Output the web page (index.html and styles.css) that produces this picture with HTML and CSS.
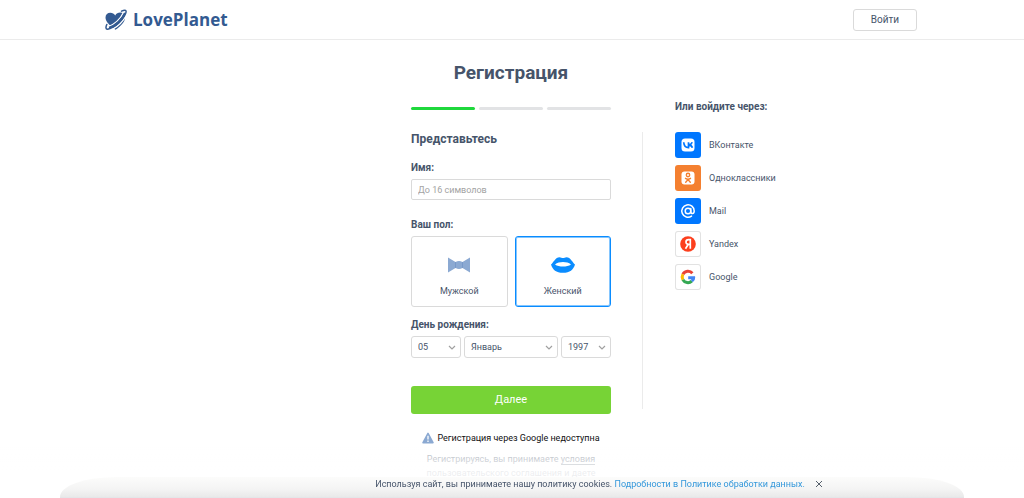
FILE: index.html
```html
<!DOCTYPE html>
<html lang="ru">
<head>
<meta charset="utf-8">
<meta name="viewport" content="width=device-width, initial-scale=1">
<title>LovePlanet — Регистрация</title>
<link rel="stylesheet" href="styles.css">
</head>
<body>
<header class="header">
  <div class="header-inner">
    <a class="logo" href="#">
      <svg class="logo-mark" viewBox="0 0 22 22" aria-hidden="true">
        <path fill="#335a91" d="M6.800 18C3.500 15 .5 12 .5 8.500.5 5.500 2.600 3.700 5.300 3.700c2.200 0 3.800.9 4.900 2.700 1.200-2 2.800-2.900 5-2.900 2.900 0 4.800 2 4.800 4.900 0 4.800-4.500 8.600-9.500 12.300z"/>
        <path fill="none" stroke="#fff" stroke-width="1.500" d="M2 18.500C8.500 16 15.500 10 18.800 3M7 20.500C13 17.500 18 12.500 21 6.500"/>
        <path fill="none" stroke="#335a91" stroke-width="1.500" stroke-linecap="round" d="M1.800 15.500C.6 18.200.6 20.400 2.600 20.200 9 19 18.500 10.500 20.800 4c.9-2.600-.2-3.800-4.300-1.800"/>
        <path fill="none" stroke="#335a91" stroke-width="2" d="M4 18.800C11 16.500 17.500 10 20 4"/>
      </svg>
      <span>LovePlanet</span>
    </a>
    <button class="login" type="button">Войти</button>
  </div>
</header>

<main class="main">
  <h1 class="title">Регистрация</h1>
  <form class="form">
    <div class="steps"><span class="step step-active"></span><span class="step"></span><span class="step"></span></div>
    <h2 class="subtitle">Представьтесь</h2>
    <label class="label" for="name">Имя:</label>
    <input class="input" id="name" type="text" maxlength="16" placeholder="До 16 символов">
    <fieldset class="group">
      <legend class="label">Ваш пол:</legend>
      <div class="genders">
        <label class="gender">
          <input class="gender-radio" type="radio" name="gender" value="m">
          <svg class="gender-icon" viewBox="0 0 24 18" aria-hidden="true">
            <path fill="#8ba9d2" d="M1 1.500 8.500 6Q12 4.200 15.500 6L23 1.500v15L15.500 12Q12 13.800 8.500 12L1 16.500z"/>
            <path fill="none" stroke="#7396c6" stroke-width=".8" d="M8.500 6V12M15.500 6V12"/>
          </svg>
          <span>Мужской</span>
        </label>
        <label class="gender">
          <input class="gender-radio" type="radio" name="gender" value="f" checked>
          <svg class="gender-icon" viewBox="0 0 24 18" aria-hidden="true">
            <path fill="#0a8cff" fill-rule="evenodd" d="M0 8.500C2.500 6.500 4.500 1.200 8.500 1.200c1.500 0 2.300.8 3.500.8s2-.8 3.500-.8c4 0 6 5.300 8.500 7.300-1.800 5.500-5 8.300-12 8.300S1.800 14 0 8.500zM4 8.500c4 2.800 12 2.800 16 0-4-3.200-12-3.200-16 0z"/>
          </svg>
          <span>Женский</span>
        </label>
      </div>
    </fieldset>
    <fieldset class="group">
      <legend class="label">День рождения:</legend>
      <div class="dates">
        <select class="select" aria-label="День"><option>05</option></select>
        <select class="select" aria-label="Месяц"><option>Январь</option></select>
        <select class="select" aria-label="Год"><option>1997</option></select>
      </div>
    </fieldset>
    <button class="submit" type="submit">Далее</button>
  </form>

  <div class="side">
    <div class="divider"></div>
    <aside class="social">
      <h2 class="social-title">Или войдите через:</h2>
      <a class="social-link" href="#">
        <svg class="tile tile-blue" viewBox="0 0 26 26" aria-hidden="true">
          <rect x="6.500" y="6.500" width="13" height="13" rx="3.500" fill="#fff"/>
          <path fill="none" stroke="#07f" stroke-width="1.700" d="M8.700 10.200c.3 3.600 1.900 5.400 4.800 5.400V10.200M17.200 10.200c-.5 1.500-1.700 2.400-3.500 2.700 2 .2 3.200 1.200 3.700 2.900"/>
        </svg>
        <span>ВКонтакте</span>
      </a>
      <a class="social-link" href="#">
        <svg class="tile tile-orange" viewBox="0 0 26 26" aria-hidden="true">
          <rect x="6.500" y="6.500" width="13" height="13" rx="3" fill="#fff"/>
          <g fill="none" stroke="#f48030" stroke-width="1.400" stroke-linecap="round"><circle cx="13" cy="10" r="1.700"/><path d="M10.500 13.300q2.500 1.700 5 0M13 14.600l-2.300 2.600M13 14.600l2.300 2.600"/></g>
        </svg>
        <span>Одноклассники</span>
      </a>
      <a class="social-link" href="#">
        <svg class="tile tile-blue" viewBox="0 0 26 26" aria-hidden="true">
          <g fill="none" stroke="#fff" stroke-width="1.500" stroke-linecap="round"><circle cx="13" cy="13" r="2.800"/><path d="M15.800 10.500V13.600c0 2.800 3.400 2.600 3.400-.6A6.200 6.200 0 1 0 16.500 18.100"/></g>
        </svg>
        <span>Mail</span>
      </a>
      <a class="social-link" href="#">
        <svg class="tile" viewBox="0 0 26 26" aria-hidden="true">
          <circle cx="13" cy="13" r="7.800" fill="#fc3f1d"/>
          <path fill="none" stroke="#fff" stroke-width="1.700" d="M15.300 17.800V8.700H13.500c-3.300 0-3.400 4.700 0 4.700h1.600M13.300 13.300l-2.800 4.500"/>
        </svg>
        <span>Yandex</span>
      </a>
      <a class="social-link" href="#">
        <svg class="tile" viewBox="0 0 26 26" aria-hidden="true">
          <g fill="none" stroke-width="3"><path stroke="#ea4335" d="M17.400 9.200A5.800 5.800 0 0 0 7.900 10.300"/><path stroke="#fbbc05" d="M7.900 10.300a5.800 5.800 0 0 0 0 5.400"/><path stroke="#34a853" d="M7.900 15.700a5.800 5.800 0 0 0 8.900 1.500"/><path stroke="#4285f4" d="M16.800 17.200c1.300-1.100 2-2.600 1.900-3.500H13.200"/></g>
        </svg>
        <span>Google</span>
      </a>
    </aside>
  </div>

  <div class="notes">
    <p class="warning">
      <svg class="warning-icon" viewBox="0 0 12 12" aria-hidden="true">
        <path fill="#8ba9d2" stroke="#8ba9d2" stroke-width="1.500" stroke-linejoin="round" d="M6 1.300 11 10.700H1z"/>
        <path stroke="#fff" stroke-width="1.300" d="M6 3.800v3.700M6 8.500v1.400"/>
      </svg>
      <span>Регистрация через Google недоступна</span>
    </p>
    <p class="terms">Регистрируясь, вы принимаете <a class="terms-link" href="#">условия</a><br><a class="terms-link" href="#">пользовательского соглашения</a> и даете</p>
  </div>
</main>

<div class="cookies">
  <div class="cookies-bar">
    <span>Используя сайт, вы принимаете нашу политику cookies. <a class="cookies-link" href="#">Подробности в Политике обработки данных.</a></span>
    <button class="close" type="button" aria-label="Закрыть">
      <svg class="close-icon" viewBox="0 0 8 8" aria-hidden="true"><path stroke="#555f6b" stroke-width="1" d="M1 1l6 6M7 1 1 7"/></svg>
    </button>
  </div>
</div>
</body>
</html>
```
FILE: styles.css
```css
* {
  box-sizing: border-box;
}

body {
  margin: 0;
  background: #fff;
  color: #46546a;
  font: 9px/14px Roboto, "Open Sans", sans-serif;
}

button,
input,
select {
  font: inherit;
  color: inherit;
}

a {
  color: inherit;
  text-decoration: none;
}

.header {
  padding: 0 18px 0 16px;
  border-bottom: 1px solid #ebebeb;
}

.header-inner {
  display: flex;
  align-items: center;
  justify-content: space-between;
  max-width: 812px;
  height: 39px;
  margin: 0 auto;
}

.logo {
  display: flex;
  align-items: center;
  gap: 6px;
  color: #335a91;
  font: bold 17px/22px "Open Sans", sans-serif;
}

.logo-mark {
  width: 22px;
  height: 22px;
}

.login {
  width: 64px;
  height: 22px;
  padding: 0;
  border: 1px solid #dadada;
  border-radius: 3px;
  background: #fff;
  font-size: 10px;
}

.main {
  display: grid;
  grid-template-columns: 1fr 200px 1fr;
  padding: 20px 2px 0 0;
}

.title {
  grid-column: 1 / -1;
  margin: 0 0 21px;
  font-size: 19px;
  line-height: 26px;
  text-align: center;
}

.form {
  grid-column: 2;
}

.steps {
  display: grid;
  grid-template-columns: repeat(3, 1fr);
  gap: 4px;
}

.step {
  height: 3px;
  border-radius: 2px;
  background: #e2e3e5;
}

.step-active {
  background: #1fd83c;
}

.subtitle {
  margin: 21px 0 14px;
  font-size: 12px;
  line-height: 16px;
}

.label {
  display: block;
  padding: 0;
  margin-bottom: 4px;
  font-size: 10px;
  font-weight: bold;
}

.input {
  width: 100%;
  height: 21px;
  padding: 0 6px;
  border: 1px solid #dadada;
  border-radius: 2px;
  background: #fff;
}

.input::placeholder {
  color: #a3a3a3;
}

.group {
  min-width: 0;
  margin: 0;
  padding: 0;
  border: 0;
}

.input + .group {
  margin: 18px 0 11px;
}

.genders {
  display: grid;
  grid-template-columns: 1fr 1fr;
  gap: 7px;
}

.gender {
  display: flex;
  flex-direction: column;
  align-items: center;
  gap: 10px;
  padding: 19px 0 8px;
  border: 1px solid #dadada;
  border-radius: 3px;
}

.gender:has(:checked) {
  border-color: #0a8cff;
  box-shadow: inset 0 0 0 1px #84c6ff;
}

.gender-radio {
  position: absolute;
  opacity: 0;
}

.gender-icon {
  width: 24px;
  height: 18px;
}

.dates {
  display: grid;
  grid-template-columns: 50px 1fr 50px;
  gap: 3px;
}

.select {
  height: 22px;
  padding: 0 6px;
  border: 1px solid #dadada;
  border-radius: 3px;
  appearance: none;
  background: #fff url("data:image/svg+xml,%3Csvg xmlns='http://www.w3.org/2000/svg' viewBox='0 0 8 5'%3E%3Cpath fill='none' stroke='%23a0a0a0' stroke-width='1.200' d='M1 1l3 3 3-3'/%3E%3C/svg%3E") no-repeat right 4px center / 8px 5px;
}

.submit {
  width: 100%;
  height: 28px;
  margin-top: 28px;
  padding: 0;
  border: 0;
  border-radius: 3px;
  background: #77d336;
  color: #fff;
  font-size: 11px;
}

.side {
  display: flex;
  gap: 32px;
  padding-left: 31px;
}

.divider {
  width: 1px;
  margin: 25px 0 5px;
  background: #ebebeb;
}

.social {
  display: flex;
  flex-direction: column;
  align-items: flex-start;
  gap: 7px;
}

.social-title {
  margin: -7px 0 11px;
  font-size: 10px;
  line-height: 14px;
}

.social-link {
  display: flex;
  align-items: center;
  gap: 8px;
}

.tile {
  width: 26px;
  height: 26px;
  border-radius: 3px;
  box-shadow: inset 0 0 0 1px #e2e2e2;
}

.tile-blue {
  background: #07f;
  box-shadow: none;
}

.tile-orange {
  background: #f48030;
  box-shadow: none;
}

.notes {
  grid-column: 2;
  margin-top: 17px;
  text-align: center;
  white-space: nowrap;
}

.warning {
  display: flex;
  align-items: center;
  justify-content: center;
  gap: 3px;
  margin: 0 0 7px;
  color: #111;
}

.warning-icon {
  width: 12px;
  height: 12px;
}

.terms {
  margin: 0;
  color: #a3a9b2;
}

.terms-link {
  border-bottom: 1px solid currentColor;
}

.cookies {
  position: fixed;
  right: 0;
  bottom: 0;
  left: 0;
  padding: 30px 60px 0;
  background: linear-gradient(rgba(255, 255, 255, 0.1), rgba(255, 255, 255, 0.8) 24px);
}

.cookies-bar {
  display: flex;
  align-items: flex-start;
  justify-content: center;
  gap: 10px;
  height: 21px;
  padding-left: 174px;
  border-bottom: 1px solid #e4e6e9;
  border-radius: 56px 56px 0 0 / 20px 20px 0 0;
  background: linear-gradient(#fcfcfb, #f4f4f4 12px, #e9e9e9);
}

.cookies-link {
  color: #3498db;
}

.close {
  height: 14px;
  padding: 0;
  border: 0;
  background: none;
}

.close-icon {
  display: block;
  width: 8px;
  height: 8px;
}
```
